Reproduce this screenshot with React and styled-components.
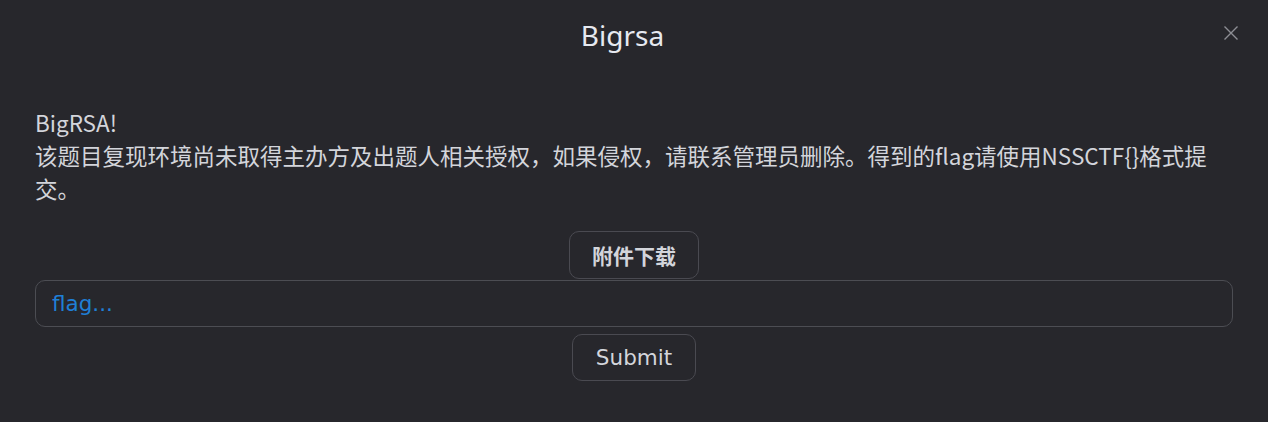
import React from 'react';
import styled, { createGlobalStyle } from 'styled-components';

const GlobalStyle = createGlobalStyle`
  html, body {
    margin: 0;
    padding: 0;
    background: #27272c;
  }
`;

function App() {
  return <Dialog>
    <GlobalStyle />
    <Header>
      <Title>Bigrsa</Title>
      <Close aria-label="close">
        <svg width="16" height="16" viewBox="0 0 16 16">
          <path d="M1.5 1.5 L14.5 14.5 M14.5 1.5 L1.5 14.5" stroke="#8d8e94" strokeWidth="1.4" fill="none" />
        </svg>
      </Close>
    </Header>

    <Body>
      <Description>
        BigRSA!<br />
        该题目复现环境尚未取得主办方及出题人相关授权，如果侵权，请联系管理员删除。得到的flag请使用NSSCTF{'{}'}格式提交。
      </Description>

      <Actions>
        <Button bold>附件下载</Button>
        <FlagInput placeholder="flag..." />
        <Button>Submit</Button>
      </Actions>
    </Body>
  </Dialog>;
}

export default App;

const Dialog = styled.div`
  width: 1268px;
  height: 422px;
  background: #27272c;
  box-sizing: border-box;
  display: flex;
  flex-direction: column;
`

const Header = styled.div`
  position: relative;
  height: 70px;
  padding-right: 23px;
  display: flex;
  align-items: center;
  justify-content: center;
`

const Title = styled.div`
  font-family: "Noto Sans", sans-serif;
  font-size: 28px;
  color: #e6e9f0;
`

const Close = styled.button`
  position: absolute;
  right: 29px;
  top: 25px;
  width: 16px;
  height: 16px;
  padding: 0;
  border: none;
  background: none;
  display: flex;
  cursor: pointer;
`

const Body = styled.div`
  padding: 36px 35px 0;
`

const Description = styled.div`
  font-family: "Noto Sans CJK SC", sans-serif;
  font-size: 22.5px;
  line-height: 33px;
  color: #d3d5db;
`

const Actions = styled.div`
  margin-top: 26px;
  display: flex;
  flex-direction: column;
  align-items: center;
`

const Button = styled.button`
  font-family: "DejaVu Sans", "Noto Sans CJK SC", sans-serif;
  font-size: ${p => p.bold ? '21px' : '21.5px'};
  font-weight: ${p => p.bold ? 700 : 400};
  color: #d3d5db;
  background: transparent;
  border: 1px solid #4a4a51;
  border-radius: 10px;
  padding: 0 ${p => p.bold ? '22px' : '23px'};
  height: ${p => p.bold ? '48px' : '47px'};
  cursor: pointer;
`

const FlagInput = styled.input`
  box-sizing: border-box;
  width: 100%;
  height: 47px;
  margin: 1px 0 7px;
  padding: 0 16px;
  background: transparent;
  border: 1px solid #4c4d53;
  border-radius: 10px;
  font-family: "DejaVu Sans", sans-serif;
  font-size: 21.5px;
  color: #d3d5db;
  outline: none;

  &::placeholder {
    color: #1f7fd6;
  }
`
